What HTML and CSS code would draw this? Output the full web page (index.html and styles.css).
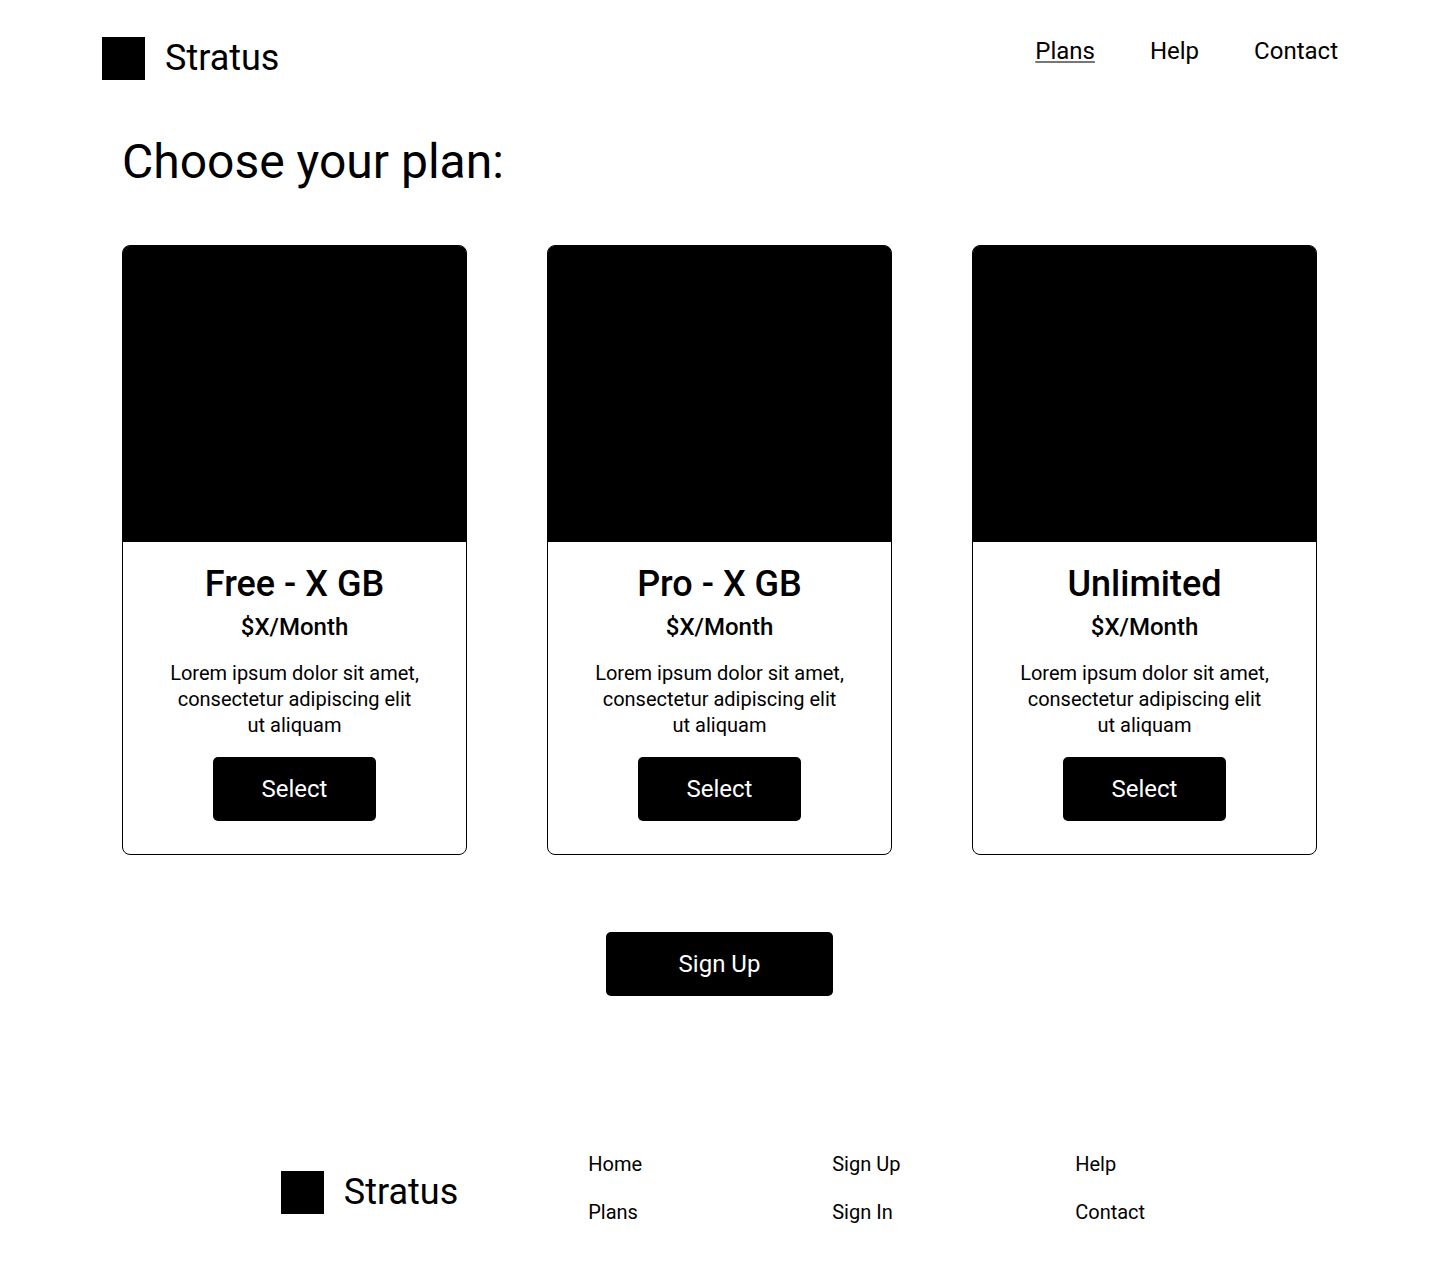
FILE: index.html
```html
<!DOCTYPE html>
<html lang="en">
<head>
  <meta charset="utf-8">
  <meta name="viewport" content="width=device-width, initial-scale=1">
  <title>Stratus – Plans</title>
  <link rel="stylesheet" href="styles.css">
</head>
<body>
  <header class="site-header">
    <a class="brand" href="#"><span class="brand-mark"></span>Stratus</a>
    <nav class="main-nav" aria-label="Main">
      <a class="active" href="#plans" aria-current="page">Plans</a>
      <a href="#help">Help</a>
      <a href="#contact">Contact</a>
    </nav>
  </header>
  <main class="content">
    <h1 class="page-title">Choose your plan:</h1>
    <section class="plans" id="plans">
      <article class="plan">
        <div class="plan-image"></div>
        <h2 class="plan-name">Free - X GB</h2>
        <p class="plan-price">$X/Month</p>
        <p class="plan-text">Lorem ipsum dolor sit amet,<br>consectetur adipiscing elit<br>ut aliquam</p>
        <button class="button" type="button">Select</button>
      </article>
      <article class="plan">
        <div class="plan-image"></div>
        <h2 class="plan-name">Pro - X GB</h2>
        <p class="plan-price">$X/Month</p>
        <p class="plan-text">Lorem ipsum dolor sit amet,<br>consectetur adipiscing elit<br>ut aliquam</p>
        <button class="button" type="button">Select</button>
      </article>
      <article class="plan">
        <div class="plan-image"></div>
        <h2 class="plan-name">Unlimited</h2>
        <p class="plan-price">$X/Month</p>
        <p class="plan-text">Lorem ipsum dolor sit amet,<br>consectetur adipiscing elit<br>ut aliquam</p>
        <button class="button" type="button">Select</button>
      </article>
    </section>
    <button class="button button-wide" type="button">Sign Up</button>
  </main>
  <footer class="site-footer">
    <a class="brand" href="#"><span class="brand-mark"></span>Stratus</a>
    <nav class="footer-nav" aria-label="Footer">
      <a href="#home">Home</a>
      <a href="#signup">Sign Up</a>
      <a href="#help">Help</a>
      <a href="#plans">Plans</a>
      <a href="#signin">Sign In</a>
      <a href="#contact">Contact</a>
    </nav>
  </footer>
</body>
</html>
```

FILE: styles.css
```css
* {
  box-sizing: border-box;
}

body {
  margin: 0;
  background: #fff;
  color: #000;
  font-family: Roboto, "Liberation Sans", sans-serif;
}

a {
  color: inherit;
  text-decoration: none;
}

.site-header {
  display: flex;
  justify-content: space-between;
  align-items: flex-start;
  padding: 36px 102px 0;
}

.brand {
  display: flex;
  align-items: center;
  gap: 20px;
  font-size: 36px;
  line-height: 44px;
}

.brand-mark {
  width: 43px;
  height: 43px;
  background: #000;
}

.main-nav {
  display: flex;
  gap: 55px;
  font-size: 24px;
  line-height: 30px;
}

.main-nav .active {
  text-decoration: underline #777;
}

.content {
  padding: 52px 123px 0 122px;
}

.page-title {
  margin: 0 0 53px;
  font-size: 48px;
  font-weight: 400;
  line-height: 60px;
}

.plans {
  display: grid;
  grid-template-columns: repeat(3, 1fr);
  gap: 80px;
}

.plan {
  display: flex;
  flex-direction: column;
  align-items: center;
  padding-bottom: 33px;
  border: 1px solid #000;
  border-radius: 8px;
  text-align: center;
}

.plan-image {
  align-self: stretch;
  height: 296px;
  border-radius: 6px 6px 0 0;
  background: #000;
}

.plan-name {
  margin: 20px 0 0;
  font-size: 36px;
  font-weight: 500;
  line-height: 44px;
}

.plan-price {
  margin: 6px 0 0;
  font-size: 24px;
  font-weight: 500;
  line-height: 30px;
}

.plan-text {
  margin: 18px 0 19px;
  font-size: 20px;
  line-height: 26px;
}

.button {
  width: 163px;
  height: 64px;
  padding: 0;
  border: 0;
  border-radius: 5px;
  background: #000;
  color: #fff;
  font: inherit;
  font-size: 24px;
}

.button-wide {
  display: block;
  width: 227px;
  margin: 77px auto 0;
}

.site-footer {
  display: flex;
  justify-content: center;
  align-items: center;
  gap: 130px;
  padding: 155px 0 48px;
}

.site-footer .brand {
  padding-top: 8px;
}

.footer-nav {
  display: grid;
  grid-template-columns: 244px 243px 84px;
  row-gap: 22px;
  font-size: 20px;
  line-height: 26px;
}
```
